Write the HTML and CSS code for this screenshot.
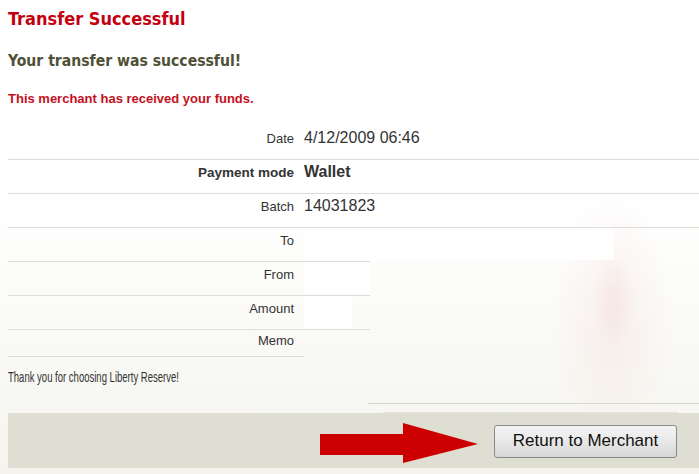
FILE: index.html
```html
<!DOCTYPE html>
<html>
<head>
<meta charset="utf-8">
<link rel="stylesheet" href="styles.css">
</head>
<body>
<div class="page">
  <h1 class="title">Transfer Successful</h1>
  <h2 class="subtitle">Your transfer was successful!</h2>
  <p class="notice">This merchant has received your funds.</p>
  <div class="details">
    <div class="row"><div class="label">Date</div><div class="value">4/12/2009 06:46</div></div>
    <div class="row"><div class="label bold">Payment mode</div><div class="value bold">Wallet</div></div>
    <div class="row"><div class="label">Batch</div><div class="value">14031823</div></div>
    <div class="row short"><div class="label">To</div><div class="value"><span class="blank w-to"></span></div></div>
    <div class="row short"><div class="label">From</div><div class="value"><span class="blank w-from"></span></div></div>
    <div class="row short"><div class="label">Amount</div><div class="value"><span class="blank w-amount"></span></div></div>
    <div class="row memo"><div class="label">Memo</div><div class="value"></div></div>
  </div>
  <p class="thanks"><span>Thank you for choosing Liberty Reserve!</span></p>
  <div class="rules"><span class="rule r1"></span><span class="rule r2"></span></div>
  <div class="footer">
    <svg class="arrow" width="160" height="40" viewBox="0 0 160 40" aria-hidden="true">
      <polygon points="0,11 83,11 83,0 158,21 83,40 83,32 0,32" fill="#cc0000"/>
    </svg>
    <button class="btn">Return to Merchant</button>
  </div>
</div>
</body>
</html>
```
FILE: styles.css
```css
html, body {
  margin: 0;
  padding: 0;
}
body {
  width: 699px;
  height: 474px;
  overflow: hidden;
  font-family: "Liberation Sans", Arial, sans-serif;
  color: #333;
  background:
    radial-gradient(ellipse 22px 50px at 614px 300px, rgba(238, 195, 190, 0.22), rgba(238, 195, 190, 0) 100%),
    radial-gradient(ellipse 60px 130px at 612px 320px, rgba(240, 210, 205, 0.28), rgba(240, 210, 205, 0) 100%),
    linear-gradient(to bottom, #ffffff 0px, #ffffff 200px, #f5f4ee 470px);
}
.page {
  padding: 8px 0 0 8px;
}
.title {
  margin: 0;
  font-family: "DejaVu Sans Condensed", "DejaVu Sans", Verdana, sans-serif;
  font-stretch: condensed;
  font-size: 18px;
  font-weight: bold;
  color: #c40010;
  line-height: 22px;
}
.subtitle {
  margin: 20px 0 0;
  font-family: "DejaVu Sans Condensed", "DejaVu Sans", Verdana, sans-serif;
  font-stretch: condensed;
  font-size: 15.6px;
  font-weight: bold;
  color: #505036;
  line-height: 22px;
}
.notice {
  margin: 19px 0 0;
  font-size: 13px;
  font-weight: bold;
  color: #c4101c;
  line-height: 16px;
}
.details {
  margin-top: 19px;
}
.row {
  display: grid;
  grid-template-columns: 286px 1fr;
  column-gap: 10px;
  height: 24px;
  padding-bottom: 9px;
  align-items: center;
  border-bottom: 1px solid #dcdcd8;
}
.row.short {
  width: 362px;
}
.row.memo {
  width: 296px;
  height: 20px;
  padding-bottom: 6px;
}
.label {
  text-align: right;
  font-size: 13px;
  color: #333;
}
.label.bold {
  font-size: 13.5px;
}
.value {
  font-size: 16px;
  color: #333;
  display: flex;
  align-items: center;
}
.bold {
  font-weight: bold;
}
.blank {
  display: block;
  height: 32px;
  margin-bottom: -8px;
  background: #fff;
}
.w-to { width: 310px; }
.w-from { width: 66px; }
.w-amount { width: 48px; }
.thanks {
  margin: 12px 0 0;
  font-size: 14px;
  color: #333;
  line-height: 16px;
}
.thanks span {
  display: inline-block;
  transform: scaleX(0.68);
  transform-origin: 0 50%;
  white-space: nowrap;
}
.rules {
  position: relative;
  height: 28px;
}
.rule {
  position: absolute;
  height: 1px;
  background: #d6d6ce;
}
.r1 { left: 360px; width: 340px; top: 18px; }
.r2 { left: 375px; width: 295px; top: 27px; background: #e4e4dc; }
.footer {
  height: 55px;
  background: #dfded3;
  display: flex;
  align-items: center;
  justify-content: flex-end;
  padding-right: 22px;
  gap: 14px;
}
.arrow {
  display: block;
  margin-top: 4px;
}
.btn {
  width: 183px;
  height: 33px;
  font-family: "Liberation Sans", Arial, sans-serif;
  font-size: 17px;
  color: #111;
  border: 1px solid #8a8a8a;
  border-radius: 3px;
  background: linear-gradient(to bottom, #f4f4f4 0%, #e8e8e8 50%, #d6d6d6 100%);
  padding: 0;
  margin-top: 1px;
}
```
